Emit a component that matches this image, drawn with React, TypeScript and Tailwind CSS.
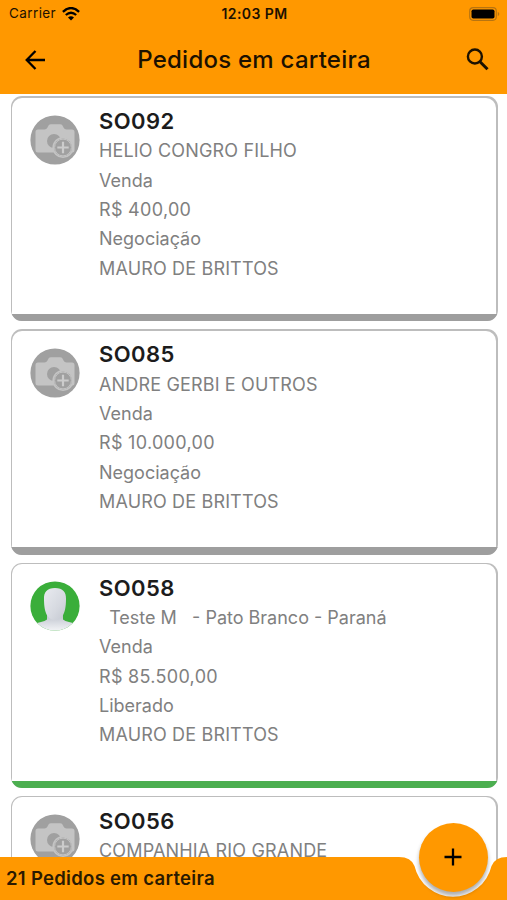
import React from "react";

// Orders list ("Pedidos em carteira")

const orders = [
  {
    id: "SO092",
    customer: "HELIO CONGRO FILHO",
    type: "Venda",
    total: "R$ 400,00",
    status: "Negociação",
    seller: "MAURO DE BRITTOS",
    approved: false,
  },
  {
    id: "SO085",
    customer: "ANDRE GERBI E OUTROS",
    type: "Venda",
    total: "R$ 10.000,00",
    status: "Negociação",
    seller: "MAURO DE BRITTOS",
    approved: false,
  },
  {
    id: "SO058",
    customer: "  Teste M   - Pato Branco - Paraná",
    type: "Venda",
    total: "R$ 85.500,00",
    status: "Liberado",
    seller: "MAURO DE BRITTOS",
    approved: true,
  },
];

// the last order is only partly visible above the bottom bar
const nextOrder = { id: "SO056", customer: "COMPANHIA RIO GRANDE" };

const CameraAvatar = () => (
  <svg viewBox="0 0 50 50" className="size-[50px]">
    <circle cx="25" cy="25" r="24.6" fill="#a0a0a0" />
    <path
      d="M8 14.5h6.5q2 0 3-2l1-2q.8-1.3 2.5-1.3h9q1.7 0 2.5 1.3l1 2q1 2 3 2H42q2.500 0 2.500 2.500v18q0 2.500-2.500 2.500H8q-2.500 0-2.500-2.500V17q0-2.500 2.500-2.500z"
      fill="#c4c4c4"
    />
    <circle cx="24" cy="26" r="7" fill="#a0a0a0" />
    <circle cx="33" cy="32.5" r="10.6" fill="#c4c4c4" />
    <circle cx="33" cy="32.5" r="8.9" fill="#a0a0a0" />
    <circle cx="33" cy="32.5" r="8.400" fill="#a0a0a0" stroke="#c4c4c4" strokeWidth="1" />
    <path d="M33 26.800v11.400M27.300 32.500h11.400" stroke="#cccccc" strokeWidth="2.200" />
  </svg>
);

const PersonAvatar = () => (
  <svg viewBox="0 0 50 50" className="size-[50px]">
    <defs>
      <linearGradient id="face" x1="0" y1="0" x2="1" y2="1">
        <stop offset="0" stopColor="#e9ebf0" />
        <stop offset="0.6" stopColor="#d6d9e0" />
        <stop offset="1" stopColor="#c4c8d1" />
      </linearGradient>
      <linearGradient id="body" x1="0" y1="0" x2="0" y2="1">
        <stop offset="0" stopColor="#bcc0ca" />
        <stop offset="0.5" stopColor="#d8dbe2" />
        <stop offset="1" stopColor="#f3f4f7" />
      </linearGradient>
      <clipPath id="round">
        <circle cx="25" cy="25" r="24.6" />
      </clipPath>
    </defs>
    <g clipPath="url(#round)">
      <rect width="50" height="50" fill="#3aae3a" />
      <path d="M17 33h16v5.500q2 1.500 6 2.500 4.500.800 7 2.500V50H4v-6.500q2.500-1.700 7-2.500 4-1 6-2.500z" fill="url(#body)" />
      <path
        d="M25 7c8 0 11.200 4 11 11 0 8-1 13-3.500 17-2 2.800-4 4-7.500 4s-5.500-1.200-7.500-4c-2.500-4-3.500-9-3.500-17-.2-7 3-11 11-11z"
        fill="url(#face)"
      />
    </g>
  </svg>
);

const OrderCard = ({ order }: { order: (typeof orders)[number] }) => (
  <article className="flex h-[225.3px] shrink-0 flex-col overflow-hidden rounded-[11px] bg-[#bdbdbd]">
    <div className="mx-[1.5px] mt-[1.5px] flex flex-1 rounded-t-[10px] bg-white pl-[17.5px]">
      <div className="mt-[17px] w-[69.5px]">
        {order.approved ? <PersonAvatar /> : <CameraAvatar />}
      </div>
      <div className="mt-[9.5px] text-[18px] leading-[29.33px] text-[#808080]">
        <h2 className="text-[22px] leading-[29.33px] font-semibold tracking-[0.4px] text-[#1c1c1c]">
          {order.id}
        </h2>
        <p className={order.approved ? "whitespace-pre" : "tracking-[0.16px]"}>{order.customer}</p>
        <p>{order.type}</p>
        <p className="tracking-[0.3px]">{order.total}</p>
        <p>{order.status}</p>
        <p className="tracking-[0.16px]">{order.seller}</p>
      </div>
    </div>
    <div className={order.approved ? "h-[7.3px] bg-[#4caf50]" : "h-[7.3px] bg-[#9e9e9e]"} />
  </article>
);

const App = () => {
  return (
    <div className="relative flex h-[900px] w-[507px] flex-col overflow-hidden bg-white font-['Inter',sans-serif]">
      <header className="h-[93.5px] shrink-0 bg-[#ff9800] text-[#1c1100]">
        <div className="grid h-[27px] grid-cols-3 items-center pr-[7px] pl-[9px] text-[13.5px]">
          <div className="flex items-center gap-[6px] tracking-[0.4px]">
            <span>Carrier</span>
            <svg viewBox="0 0 18 14" className="h-[14px] w-[18px]" fill="none" stroke="#000">
              <path d="M.9 4.8Q9-2.6 17.1 4.8" strokeWidth="2.4" />
              <path d="M3.8 8Q9 3.5 14.2 8" strokeWidth="2.3" />
              <path d="M9 13.5 6 10.4Q9 8 12 10.4z" fill="#000" stroke="none" />
            </svg>
          </div>
          <span className="text-center text-[14px] font-semibold tracking-[0.4px]">12:03 PM</span>
          <svg viewBox="0 0 31 14" className="h-[14px] w-[31px] justify-self-end">
            <rect x=".7" y=".7" width="26.6" height="12.6" rx="3.5" fill="none" stroke="#b87410" strokeWidth="1.2" />
            <rect x="2.5" y="2.5" width="23" height="9" rx="1.8" fill="#000" />
            <path d="M28.8 5v4q1.5-.5 1.5-2t-1.5-2z" fill="#b87410" />
          </svg>
        </div>
        <div className="flex h-[66px] items-center justify-between pr-[17px] pl-[25px]">
          <button aria-label="Voltar">
            <svg viewBox="0 0 20 20" className="size-[20px]" fill="none" stroke="#000" strokeWidth="2.3">
              <path d="M20 10H2M10.5 1 1.7 10l8.8 9" />
            </svg>
          </button>
          <h1 className="pr-[3px] text-[24px] font-medium tracking-[0.24px]">Pedidos em carteira</h1>
          <button aria-label="Buscar">
            <svg viewBox="0 0 24 24" className="size-[24px]" fill="none" stroke="#1c1100">
              <circle cx="8.9" cy="8.5" r="7" strokeWidth="2.4" />
              <path d="m14 13.8 7.5 7.5" strokeWidth="3" />
            </svg>
          </button>
        </div>
      </header>

      <main className="flex flex-1 flex-col gap-[8px] overflow-hidden pt-[2.5px] pr-[9.5px] pl-[10.5px]">
        {orders.map((order) => (
          <OrderCard key={order.id} order={order} />
        ))}
        <article className="flex flex-1 overflow-hidden rounded-t-[11px] bg-[#bdbdbd] px-[1.5px] pt-[1.5px]">
          <div className="flex flex-1 rounded-t-[10px] bg-white pl-[17.5px]">
            <div className="mt-[17px] w-[69.5px]">
              <CameraAvatar />
            </div>
            <div className="mt-[9.5px] text-[18px] leading-[29.33px] tracking-[0.16px] text-[#808080]">
              <h2 className="text-[22px] leading-[29.33px] font-semibold tracking-[0.4px] text-[#1c1c1c]">
                {nextOrder.id}
              </h2>
              <p>{nextOrder.customer}</p>
            </div>
          </div>
        </article>
      </main>

      {/* bottom bar lies over the list so the notch shows what is behind it */}
      <footer className="absolute inset-x-0 bottom-0 h-[43px]">
        <svg viewBox="0 0 507 43" className="absolute inset-0 h-[43px] w-[507px]">
          <path
            d="M0 0H399Q411 0 414.5 9A39.500 39.500 0 0 0 491.500 9Q495 0 507 0V43H0z"
            fill="#ff9800"
          />
        </svg>
        <p className="relative pl-[6px] text-[18.5px] leading-[43px] font-semibold tracking-[0.3px] text-[#2b1a00]">
          21 Pedidos em carteira
        </p>
      </footer>
      <button
        aria-label="Adicionar"
        className="absolute top-[822.5px] left-[418.5px] flex size-[69px] items-center justify-center rounded-full bg-[#ff9800] shadow-[0_4px_4px_rgba(0,0,0,0.32)]"
      >
        <svg viewBox="0 0 18 18" className="size-[18px]" stroke="#000" strokeWidth="2.3">
          <path d="M9 .5v17M.5 9h17" />
        </svg>
      </button>
    </div>
  );
};

export default App;
